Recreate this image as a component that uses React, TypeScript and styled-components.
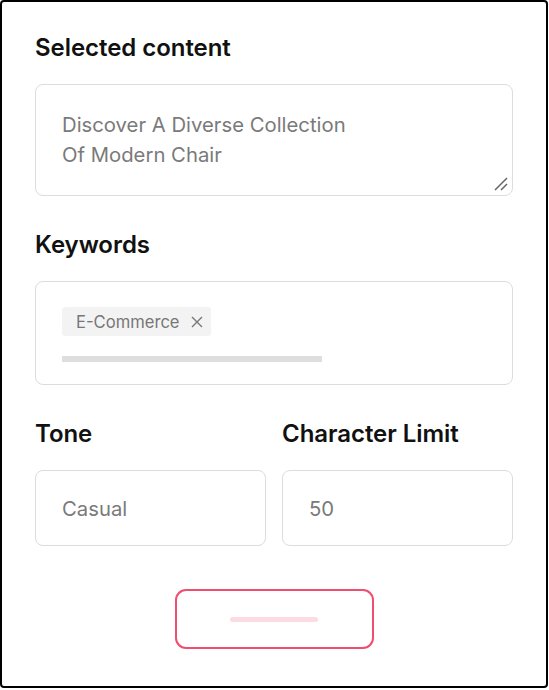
import React from 'react'
import styled, { createGlobalStyle } from 'styled-components'

const Global = createGlobalStyle`
  html, body {
    margin: 0;
    padding: 0;
    background: #fff;
  }
  body {
    font-family: Inter, "Noto Sans", "Liberation Sans", sans-serif;
    -webkit-font-smoothing: antialiased;
  }
`

const Frame = styled.div`
  box-sizing: border-box;
  width: 548px;
  height: 688px;
  border: 2px solid #000;
  border-radius: 4px;
  padding: 32px 33px 0 33px;
  display: flex;
  flex-direction: column;
`

const Section = styled.section`
  display: flex;
  flex-direction: column;
  gap: 22px;
  margin-bottom: 35px;
`

const Label = styled.h2`
  margin: 0;
  font-size: 24px;
  line-height: 28px;
  font-weight: 600;
  color: #111;
  letter-spacing: -0.05px;
`

const Box = styled.div<{ $height: number }>`
  position: relative;
  box-sizing: border-box;
  height: ${p => p.$height}px;
  border: 1.5px solid #dcdcdc;
  border-radius: 8px;
  background: #fff;
`

const AreaText = styled.div`
  padding: 25px 0 0 26px;
  font-size: 20.3px;
  line-height: 30px;
  color: #7a7a7a;
`

const Grip = styled.svg`
  position: absolute;
  right: 3px;
  bottom: 3px;
`

const KeywordBody = styled.div`
  display: flex;
  flex-direction: column;
  align-items: flex-start;
  gap: 20px;
  padding: 25px 0 0 26px;
`

const Chip = styled.span`
  display: inline-flex;
  align-items: center;
  gap: 11px;
  height: 29px;
  padding: 0 8px 0 14px;
  background: #f3f3f3;
  border-radius: 3px;
  font-size: 16.6px;
  color: #777;
`

const Bar = styled.div`
  width: 260px;
  height: 6px;
  background: #dedede;
`

const Row = styled.div`
  display: grid;
  grid-template-columns: 1fr 1fr;
  column-gap: 16px;
`

const InputText = styled.div`
  height: 100%;
  display: flex;
  align-items: center;
  padding-left: 26px;
  font-size: 20.3px;
  color: #7a7a7a;
`

const ButtonWrap = styled.div`
  display: flex;
  justify-content: center;
  margin-top: 8px;
`

const Button = styled.button`
  box-sizing: border-box;
  width: 199px;
  height: 60px;
  border: 2px solid #f04e6e;
  border-radius: 11px;
  background: #fff;
  display: flex;
  align-items: center;
  justify-content: center;
  padding: 0;
`

const Placeholder = styled.span`
  width: 88px;
  height: 5px;
  border-radius: 3px;
  background: #fddbe2;
`

const CloseIcon = () => (
  <svg width="12" height="12" viewBox="0 0 12 12">
    <path d="M1 1L11 11M11 1L1 11" stroke="#777" strokeWidth="1.4" />
  </svg>
)

export default function App() {
  return (
    <>
      <Global />
      <Frame>
        <Section>
          <Label>Selected content</Label>
          <Box $height={112}>
            <AreaText>
              Discover A Diverse Collection
              <br />
              Of Modern Chair
            </AreaText>
            <Grip width="16" height="16" viewBox="0 0 16 16">
              <path d="M14 2L2 14M14 8L8 14" stroke="#666" strokeWidth="1.5" />
            </Grip>
          </Box>
        </Section>
        <Section>
          <Label>Keywords</Label>
          <Box $height={104}>
            <KeywordBody>
              <Chip>
                E-Commerce
                <CloseIcon />
              </Chip>
              <Bar />
            </KeywordBody>
          </Box>
        </Section>
        <Row>
          <Section>
            <Label>Tone</Label>
            <Box $height={76}>
              <InputText>Casual</InputText>
            </Box>
          </Section>
          <Section>
            <Label>Character Limit</Label>
            <Box $height={76}>
              <InputText>50</InputText>
            </Box>
          </Section>
        </Row>
        <ButtonWrap>
          <Button aria-label="Generate">
            <Placeholder />
          </Button>
        </ButtonWrap>
      </Frame>
    </>
  )
}
